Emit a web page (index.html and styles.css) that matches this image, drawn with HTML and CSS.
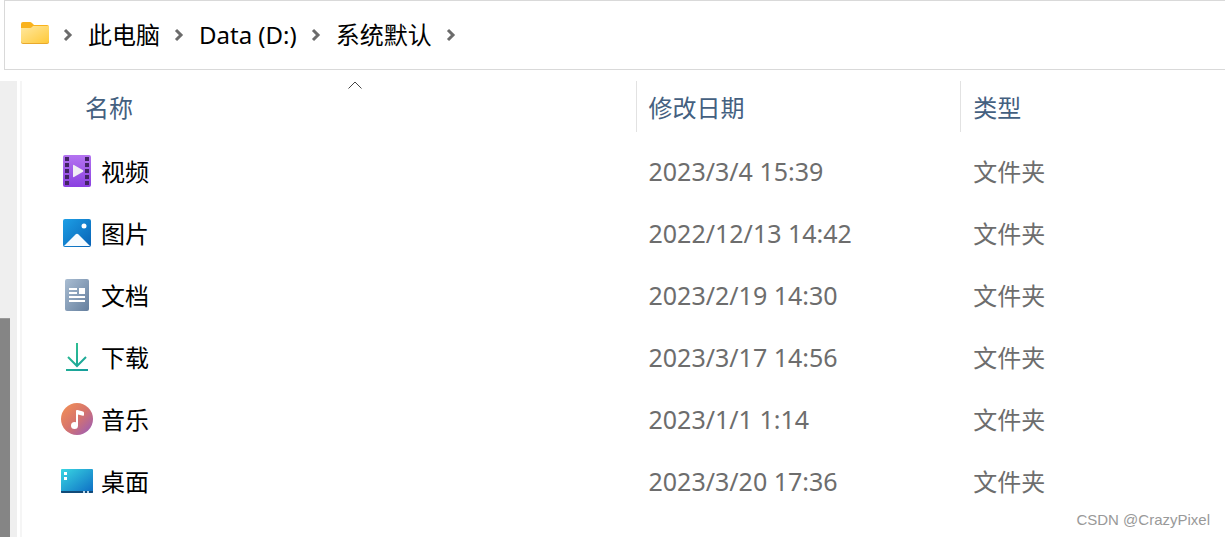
FILE: index.html
```html
<!DOCTYPE html>
<html lang="zh-CN">
<head>
    <meta charset="UTF-8">
    <meta name="viewport" content="width=device-width, initial-scale=1.0">
    <title>系统默认</title>
    <link rel="stylesheet" href="styles.css">
</head>
<body>
    <nav class="address-bar">
        <svg class="folder" viewBox="0 0 28 22">
            <defs>
                <linearGradient id="folder-front" x1="0" y1="0" x2="1" y2="1">
                    <stop offset="0" stop-color="#ffe8a0"/>
                    <stop offset="1" stop-color="#ffc938"/>
                </linearGradient>
            </defs>
            <path d="M0 2Q0 0 2 0H9Q10 0 11 1L13 3H26Q28 3 28 5V12H0Z" fill="#f9b21c"/>
            <path d="M0 6H9Q10 6 11 5L12 4H28V20Q28 22 26 22H2Q0 22 0 20Z" fill="#e9a92c"/>
            <path d="M0 6H9Q10 6 11 5L12 4H28V19Q28 21 26 21H2Q0 21 0 19Z" fill="url(#folder-front)"/>
        </svg>
        <svg class="chevron" viewBox="0 0 8 12"><path d="M1 1L6 6L1 11"/></svg>
        <a href="#">此电脑</a>
        <svg class="chevron" viewBox="0 0 8 12"><path d="M1 1L6 6L1 11"/></svg>
        <a href="#">Data (D:)</a>
        <svg class="chevron" viewBox="0 0 8 12"><path d="M1 1L6 6L1 11"/></svg>
        <a href="#">系统默认</a>
        <svg class="chevron" viewBox="0 0 8 12"><path d="M1 1L6 6L1 11"/></svg>
    </nav>
    <main class="content">
        <div class="scrollbar"><div class="thumb"></div></div>
        <div class="pane">
            <table class="files">
                <thead>
                    <tr>
                        <th class="name">
                            名称
                            <svg class="sort" viewBox="0 0 14 8"><path d="M0.5 7.5L7 1L13.5 7.5"/></svg>
                        </th>
                        <th class="date">修改日期</th>
                        <th class="type">类型</th>
                    </tr>
                </thead>
                <tbody>
                    <tr>
                        <td>
                            <div class="item">
                                <svg class="icon" viewBox="0 0 32 32">
                                    <defs>
                                        <linearGradient id="video" x1="0" y1="0" x2="0" y2="1">
                                            <stop offset="0" stop-color="#b474f0"/>
                                            <stop offset="1" stop-color="#8a40e0"/>
                                        </linearGradient>
                                    </defs>
                                    <rect x="2" y="0" width="28" height="32" rx="2" fill="url(#video)"/>
                                    <path d="M4 2h4v4h-4zM4 8h4v4h-4zM4 14h4v4h-4zM4 20h4v4h-4zM4 26h4v4h-4zM24 2h4v4h-4zM24 8h4v4h-4zM24 14h4v4h-4zM24 20h4v4h-4zM24 26h4v4h-4z" fill="#432465"/>
                                    <path d="M12 10.500Q12 9.500 13 10L22 15.300Q22.800 16 22 16.700L13 22Q12 22.500 12 21.500Z" fill="#f0edf4"/>
                                </svg>
                                视频
                            </div>
                        </td>
                        <td>2023/3/4 15:39</td>
                        <td class="kind">文件夹</td>
                    </tr>
                    <tr>
                        <td>
                            <div class="item">
                                <svg class="icon" viewBox="0 0 32 32">
                                    <defs>
                                        <linearGradient id="picture" x1="0" y1="0" x2="1" y2="1">
                                            <stop offset="0" stop-color="#1d9fe6"/>
                                            <stop offset="1" stop-color="#0862b5"/>
                                        </linearGradient>
                                    </defs>
                                    <rect x="2" y="2" width="28" height="28" rx="2" fill="url(#picture)"/>
                                    <path d="M3 29L14.500 17.500Q16 16 17.500 17.500L29 29Z" fill="#f6fbff"/>
                                    <circle cx="23" cy="9" r="2.500" fill="#fff"/>
                                </svg>
                                图片
                            </div>
                        </td>
                        <td>2022/12/13 14:42</td>
                        <td class="kind">文件夹</td>
                    </tr>
                    <tr>
                        <td>
                            <div class="item">
                                <svg class="icon" viewBox="0 0 32 32">
                                    <defs>
                                        <linearGradient id="document" x1="0" y1="0" x2="1" y2="1">
                                            <stop offset="0" stop-color="#a9bdd2"/>
                                            <stop offset="1" stop-color="#657f9e"/>
                                        </linearGradient>
                                    </defs>
                                    <rect x="4" y="0" width="24" height="32" rx="2" fill="url(#document)"/>
                                    <path d="M8 9h8v2h-8zM8 13h8v2h-8zM18 9h6v6h-6zM8 17h16v2h-16zM8 21h16v2h-16z" fill="#fff"/>
                                </svg>
                                文档
                            </div>
                        </td>
                        <td>2023/2/19 14:30</td>
                        <td class="kind">文件夹</td>
                    </tr>
                    <tr>
                        <td>
                            <div class="item">
                                <svg class="icon" viewBox="0 0 32 32">
                                    <defs>
                                        <linearGradient id="download" gradientUnits="userSpaceOnUse" x1="5" y1="2" x2="27" y2="30">
                                            <stop offset="0" stop-color="#35c690"/>
                                            <stop offset="1" stop-color="#139c9b"/>
                                        </linearGradient>
                                    </defs>
                                    <path d="M16 2V25M7 16L16 25L25 16M5 29H27" fill="none" stroke="url(#download)" stroke-width="2"/>
                                </svg>
                                下载
                            </div>
                        </td>
                        <td>2023/3/17 14:56</td>
                        <td class="kind">文件夹</td>
                    </tr>
                    <tr>
                        <td>
                            <div class="item">
                                <svg class="icon" viewBox="0 0 32 32">
                                    <defs>
                                        <linearGradient id="music" x1="0.100" y1="0.100" x2="0.900" y2="0.900">
                                            <stop offset="0" stop-color="#ef8c58"/>
                                            <stop offset="0.500" stop-color="#d6746c"/>
                                            <stop offset="1" stop-color="#a25fae"/>
                                        </linearGradient>
                                    </defs>
                                    <circle cx="16" cy="16" r="16" fill="url(#music)"/>
                                    <circle cx="13.500" cy="22.500" r="3.500" fill="#fff"/>
                                    <path d="M15 23V8Q15 6.500 16.500 7L22 8.500Q23 8.800 23 10V12Q23 13 22 12.700L17 11.500V23Z" fill="#fff"/>
                                </svg>
                                音乐
                            </div>
                        </td>
                        <td>2023/1/1 1:14</td>
                        <td class="kind">文件夹</td>
                    </tr>
                    <tr>
                        <td>
                            <div class="item">
                                <svg class="icon" viewBox="0 0 32 32">
                                    <defs>
                                        <linearGradient id="desktop" x1="0" y1="0" x2="1" y2="1">
                                            <stop offset="0" stop-color="#39d6e2"/>
                                            <stop offset="1" stop-color="#0d6cc4"/>
                                        </linearGradient>
                                    </defs>
                                    <rect x="0" y="4" width="32" height="24" rx="1" fill="url(#desktop)"/>
                                    <path d="M0 26H32V27Q32 28 31 28H1Q0 28 0 27Z" fill="#124a78"/>
                                    <path d="M3 7h3v3h-3zM3 12h3v3h-3z" fill="#fff"/>
                                    <path d="M22 26h2v2h-2zM26 26h2v2h-2z" fill="#b9d6ea"/>
                                </svg>
                                桌面
                            </div>
                        </td>
                        <td>2023/3/20 17:36</td>
                        <td class="kind">文件夹</td>
                    </tr>
                </tbody>
            </table>
        </div>
    </main>
    <div class="watermark">CSDN @CrazyPixel</div>
</body>
</html>
```
FILE: styles.css
```css
* {
    box-sizing: border-box;
}
body {
    margin: 0;
    min-height: 100vh;
    display: flex;
    flex-direction: column;
    position: relative;
    background: #fff;
    color: #000;
    font-family: "Noto Sans", "Noto Sans CJK SC", sans-serif;
    font-size: 24px;
    line-height: 36px;
}
.address-bar {
    display: flex;
    align-items: center;
    height: 70px;
    margin-left: 4px;
    padding-left: 16px;
    border: 1px solid #d9d9d9;
    border-right: none;
}
.address-bar a {
    color: #000;
    text-decoration: none;
}
.folder {
    width: 28px;
    height: 22px;
    margin-bottom: 4px;
}
.chevron {
    width: 8px;
    height: 12px;
    margin: 0 16px 0 15px;
    fill: none;
    stroke: #6b6b6b;
    stroke-width: 3;
    overflow: visible;
}
.content {
    flex: 1;
    display: flex;
    margin-top: 11px;
}
.scrollbar {
    width: 17px;
    margin-right: 3px;
    padding-top: 237px;
    display: flex;
    background: #efefef;
}
.thumb {
    width: 10px;
    background: #858585;
    border-top: 1px solid #9a9a9a;
}
.pane {
    flex: 1;
    border-left: 2px solid #f5f5f5;
}
.files {
    width: 100%;
    table-layout: fixed;
    border-collapse: separate;
    border-spacing: 0;
}
th {
    position: relative;
    height: 51px;
    padding: 2px 0 0 12px;
    color: #44607f;
    font-weight: normal;
    text-align: left;
    border-left: 1px solid #e2e2e2;
}
.name {
    width: 51%;
    padding-left: 63px;
    border-left: none;
}
.date {
    width: 27%;
}
.sort {
    position: absolute;
    top: 0;
    left: 326px;
    width: 14px;
    height: 8px;
    fill: none;
    stroke: #444;
}
tbody::before {
    content: "";
    display: block;
    height: 9px;
}
td {
    height: 62px;
    padding: 0 0 2px 13px;
    color: #6d6d6d;
    font-size: 25px;
}
td.kind {
    padding-bottom: 0;
    font-size: 24px;
}
td:first-child {
    padding: 0 0 0 39px;
}
.item {
    display: flex;
    align-items: center;
    gap: 8px;
    color: #000;
    font-size: 24px;
}
.icon {
    width: 32px;
    height: 32px;
    margin-bottom: 2px;
}
.watermark {
    position: absolute;
    right: 15px;
    bottom: 7px;
    color: #999;
    font-family: "Liberation Sans", sans-serif;
    font-size: 15px;
    line-height: 20px;
}
```
